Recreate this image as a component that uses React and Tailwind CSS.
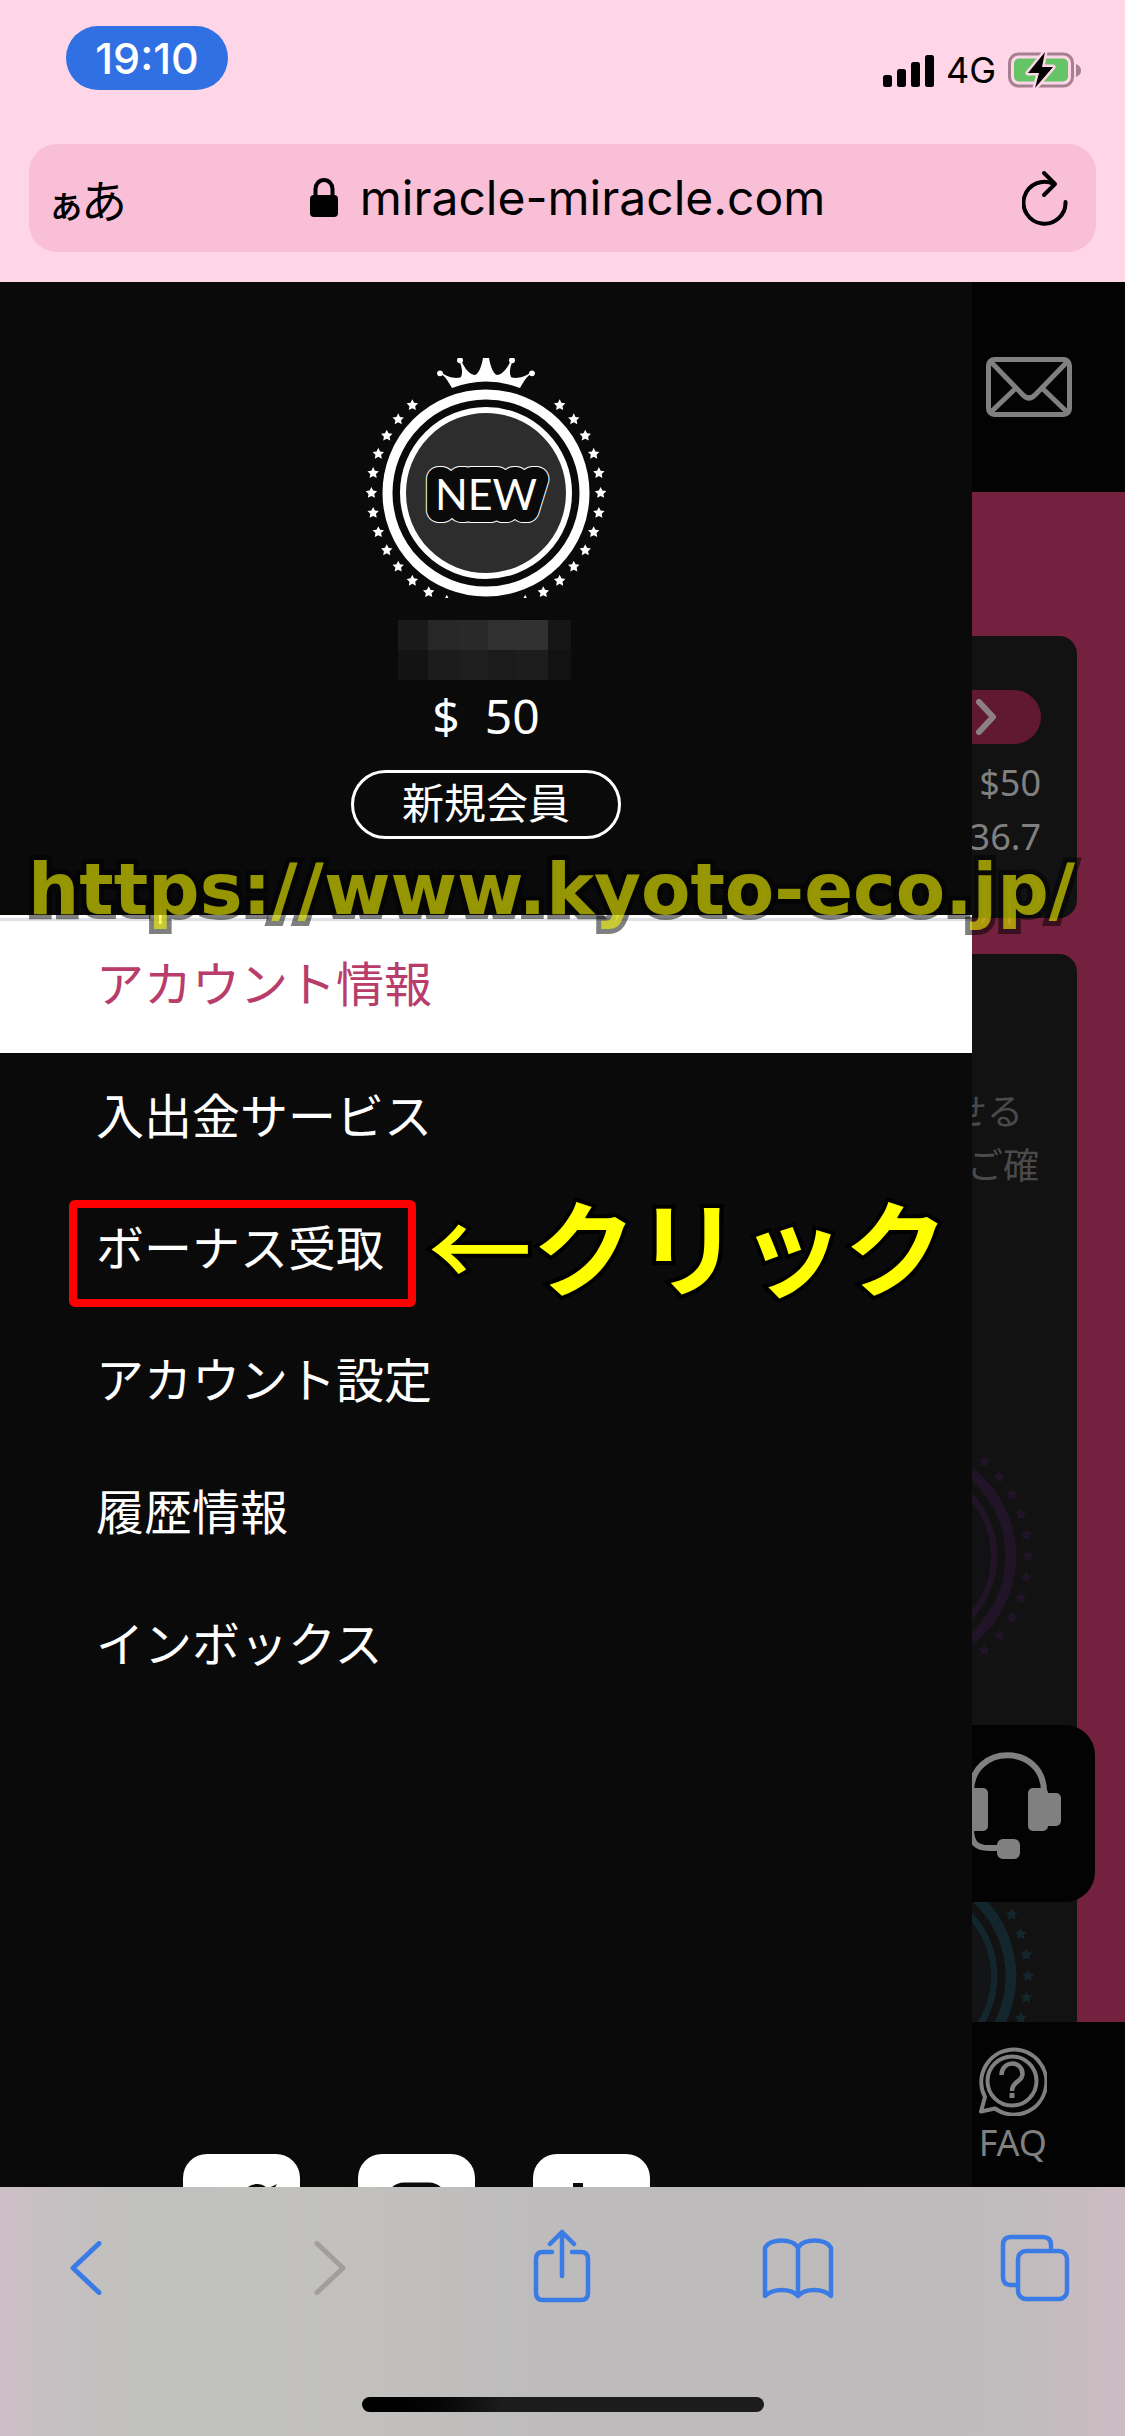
import React from "react";

const JP = "font-['Noto_Sans','Noto_Sans_CJK_JP',sans-serif]";

function starPoints(cx, cy, r) {
  const pts = [];
  for (let i = 0; i < 10; i++) {
    const a = (Math.PI / 5) * i - Math.PI / 2;
    const rad = i % 2 ? r * 0.5 : r;
    pts.push(`${(cx + Math.cos(a) * rad).toFixed(2)},${(cy + Math.sin(a) * rad).toFixed(2)}`);
  }
  return pts.join(" ");
}

const STAR_ANGLES = Array.from({ length: 36 }, (_, i) => i * 10).filter((a) => a < 240 || a > 300);

function Badge({ color, fill, label, className }) {
  return (
    <svg viewBox="0 0 240 240" className={className} role="img" aria-label={label || "rank"}>
      {STAR_ANGLES.map((a) => {
        const t = (a * Math.PI) / 180;
        return <polygon key={a} points={starPoints(120 + Math.cos(t) * 114.6, 135 + Math.sin(t) * 114.6, 6)} fill={color} />;
      })}
      <path
        d="M86 30 C82 23 79 18 74 15 L75 14 C82 20 91 21 95 19 C97 15 96 8 93 2.500 L95 2 C99 12 105 17 109 17 C114 15 117 4 118 -8 H122 C123 4 126 15 131 17 C135 17 141 12 145 2 L147 2.500 C144 8 143 15 145 19 C149 21 158 20 165 14 L166 15 C161 18 158 23 154 30 Q120 17 86 30Z"
        fill={color}
      />
      <g fill={color}>
        <circle cx="74" cy="15.300" r="2.900" />
        <circle cx="94" cy="2.300" r="3" />
        <circle cx="146" cy="2.300" r="3" />
        <circle cx="166" cy="15.300" r="2.900" />
      </g>
      <circle cx="120" cy="135" r="98.500" fill="none" stroke={color} strokeWidth="10" />
      <circle cx="120" cy="135" r="83" fill={fill} stroke={color} strokeWidth="6" />
      {label && (
        <g fontFamily="Lato, sans-serif" fontSize="43" textAnchor="middle" strokeLinejoin="round">
          <text x="120" y="152" fill="#fff" stroke="#fff" strokeWidth="26">{label}</text>
          <text x="120" y="152" fill="#0a0a0a" stroke="#0a0a0a" strokeWidth="24">{label}</text>
          <text x="120" y="152" fill="#fff">{label}</text>
        </g>
      )}
    </svg>
  );
}

function BrowserHeader() {
  return (
    <header className="bg-[#ffd5e8] px-[29px] pb-[30px] text-black font-['Inter',sans-serif]">
      <div className="flex h-36 items-start justify-between pl-[37px] pr-[14px] pt-[26px]">
        <div className="flex h-16 w-[162px] items-center justify-center rounded-full bg-[#3070e3] text-[43px] font-medium leading-none text-white">
          19:10
        </div>
        <div className="flex items-center pt-[26px]">
          <svg width="51" height="33" viewBox="0 0 51 33" aria-label="signal">
            <rect x="0" y="21" width="9" height="12" rx="2.500" />
            <rect x="14" y="15" width="9" height="18" rx="2.500" />
            <rect x="28" y="8" width="9" height="25" rx="2.500" />
            <rect x="42" y="1" width="9" height="32" rx="2.500" />
          </svg>
          <span className="ml-3 text-4xl leading-8">4G</span>
          <svg className="ml-3" width="74" height="36" viewBox="0 0 74 36" aria-label="battery">
            <rect x="1.500" y="2" width="63" height="32" rx="9" fill="none" stroke="#a5808f" strokeWidth="3" />
            <path d="M68 12 Q73 14 73 18.500 Q73 23 68 25Z" fill="#a5808f" />
            <rect x="6" y="6.500" width="54" height="23" rx="5" fill="#64c466" />
            <path d="M37 0 L20 21 H31 L27 36 L45 15 H34 Z" fill="#000" stroke="#ffd5e8" strokeWidth="5" paintOrder="stroke" strokeLinejoin="round" />
          </svg>
        </div>
      </div>
      <div className="flex h-[108px] items-center justify-between rounded-[28px] bg-[#f8bfd7] pl-[18px] pr-7">
        <button className="flex items-baseline font-['Noto_Sans_CJK_JP',sans-serif] leading-none" aria-label="ページ設定">
          <span className="-mr-1 text-[38px] font-medium">ぁ</span>
          <span className="text-[46px]">あ</span>
        </button>
        <div className="mr-[14px] flex items-center gap-[22px]">
          <svg width="28" height="40" viewBox="0 0 28 40" aria-label="secure">
            <rect x="0" y="17" width="28" height="22" rx="4" />
            <path d="M5.500 19 V11 A8.500 9 0 0 1 22.500 11 V19" fill="none" stroke="#000" strokeWidth="4" />
          </svg>
          <span className="text-5xl leading-none">miracle-miracle.com</span>
        </div>
        <button aria-label="再読み込み">
          <svg width="46" height="56" viewBox="0 0 46 56" fill="none" stroke="#000" strokeWidth="4" strokeLinecap="round" strokeLinejoin="round">
            <path d="M32 14 A21 21 0 1 0 43.500 32" />
            <path d="M22 3 L33 14 L22 25" />
          </svg>
        </button>
      </div>
    </header>
  );
}

const MOSAIC = [
  ["bg-[#1a1a1a]", "bg-[#272727]", "bg-[#292929]", "bg-[#303030]", "bg-[#313131]", "bg-[#161616]"],
  ["bg-[#131313]", "bg-[#1c1c1c]", "bg-[#1e1e1e]", "bg-[#1b1b1b]", "bg-[#1d1d1d]", "bg-[#121212]"],
];

const MENU = ["アカウント情報", "入出金サービス", "ボーナス受取", "アカウント設定", "履歴情報", "インボックス"];

function SocialLinks() {
  return (
    <div className="flex h-[33px] gap-[58px] overflow-hidden pl-[183px]">
      <a href="#twitter" aria-label="Twitter" className="h-[117px] w-[117px] shrink-0 rounded-3xl bg-white">
        <svg viewBox="0 0 117 117">
          <path d="M95 35 C92 37 90 38 86 38 C90 36 92 34 94 30 C90 32 88 33 84 34 C76 26 58 30 57 49 C44 48 34 42 27 33 C22 42 25 52 32 58 C28 58 26 57 24 56 C24 65 30 72 38 74 C70 100 98 75 87 44 C91 41 93 38 95 35Z" fill="#0a0a0a" />
        </svg>
      </a>
      <a href="#instagram" aria-label="Instagram" className="h-[117px] w-[117px] shrink-0 rounded-3xl bg-white">
        <svg viewBox="0 0 117 117" fill="none" stroke="#0a0a0a" strokeWidth="7">
          <rect x="32" y="32" width="53" height="53" rx="14" />
          <circle cx="58" cy="58" r="12" />
        </svg>
      </a>
      <a href="#tumblr" aria-label="Tumblr" className="h-[117px] w-[117px] shrink-0 rounded-3xl bg-white">
        <svg viewBox="0 0 117 117" fill="none" stroke="#0a0a0a" strokeWidth="10">
          <path d="M45 29 V75 Q45 90 62 90 H72 M45 48 H70" />
        </svg>
      </a>
    </div>
  );
}

function Drawer() {
  return (
    <aside className="flex min-h-[1905px] w-[86.4%] shrink-0 flex-col overflow-hidden bg-[#0a0a0a] text-white">
      <div className="flex h-[636px] flex-col items-center pt-[76px]">
        <Badge color="#fff" fill="#2d2d2d" label="NEW" className="size-60" />
        <div className="mt-[22px] w-[176px]" aria-hidden="true">
          {MOSAIC.map((row, i) => (
            <div key={i} className="flex h-[30px]">
              {row.map((c, j) => (
                <span key={j} className={`${c} ${j === 5 ? "w-[23px]" : "w-[30px]"}`} />
              ))}
            </div>
          ))}
        </div>
        <p className="mt-1 font-['Noto_Sans',sans-serif] text-5xl leading-[64px]">$&nbsp; 50</p>
        <button className={`mt-[22px] h-[69px] w-[270px] rounded-full border-3 border-white pb-[3px] text-[42px] leading-none ${JP}`}>新規会員</button>
      </div>
      <nav>
        <ul>
          {MENU.map((label, i) => (
            <li key={label} className={i === 0 ? "border-t-3 border-[#dee2e6] bg-white text-[#b83d6b] ring-3 ring-white" : "relative"}>
              <a href="#menu" className={`flex items-center pl-24 text-5xl ${i === 0 ? "h-[129px] pb-1" : "h-[132px]"} ${JP}`}>
                {label}
              </a>
              {i === 2 && (
                <div className="pointer-events-none absolute left-[69px] top-[18px] flex h-[107px] items-center whitespace-nowrap text-[#ff0] [-webkit-text-stroke:8px_#000] [paint-order:stroke_fill]">
                  <span className="h-full w-[347px] rounded-md border-8 border-[#f00]" />
                  <span className="ml-3 pb-5 font-['Noto_Sans_CJK_JP',sans-serif] text-[104px] font-bold leading-none">
                    <span className="font-medium">←</span>クリック
                  </span>
                </div>
              )}
            </li>
          ))}
        </ul>
      </nav>
      <div className="mt-auto">
        <SocialLinks />
      </div>
    </aside>
  );
}

function PageBehind() {
  return (
    <section className="relative flex min-w-0 flex-1 flex-col overflow-hidden bg-[#73213e] font-['Noto_Sans','Noto_Sans_CJK_JP',sans-serif] text-[#808080]">
      <div className="flex h-[210px] shrink-0 items-center justify-end bg-[#030303] pr-[53px]">
        <button aria-label="メール">
          <svg width="86" height="60" viewBox="0 0 86 60" fill="none" stroke="#808080" strokeWidth="5" strokeLinecap="round" strokeLinejoin="round">
            <rect x="2.500" y="2.500" width="81" height="55" rx="6" />
            <path d="M5 5 L37 38 Q43 44 49 38 L81 5 M5 55 L30 31 M81 55 L56 31" />
          </svg>
        </button>
      </div>
      <div className="mr-12 mt-36 flex h-[282px] shrink-0 flex-col items-end rounded-r-[18px] bg-[#121212] pr-9 pt-[54px] text-4xl leading-[54px]">
        <button aria-label="詳細" className="flex h-[54px] w-full items-center justify-start rounded-r-full bg-[#611831] pl-1">
          <svg width="22" height="36" viewBox="0 0 22 36" fill="none" stroke="#8c8086" strokeWidth="6" strokeLinecap="round" strokeLinejoin="round">
            <path d="M3 3 L17 18 L3 33" />
          </svg>
        </button>
        <p className="mt-3">$50</p>
        <p>36.7</p>
      </div>
      <div className="mr-12 mt-9 flex min-h-0 flex-1 flex-col items-end overflow-hidden rounded-tr-[18px] bg-[#121212] contain-size">
        <p className="flex shrink-0 flex-col items-end whitespace-nowrap pr-[38px] pt-[131px] text-4xl leading-[54px] text-[#4a4a4a]">
          <span className="pr-4">せる</span>
          <span>ご確</span>
        </p>
        <Badge color="#211426" fill="#121214" className="mr-[43px] mt-[218px] size-[258px] shrink-0" />
        <Badge color="#13262d" fill="#121416" className="mr-[43px] mt-[162px] size-[258px] shrink-0" />
      </div>
      <div className="flex h-[165px] shrink-0 flex-col items-end bg-[#030303] pr-[78px] pt-6 text-4xl leading-[54px]">
        <svg width="70" height="70" viewBox="0 0 70 70" fill="none" stroke="#808080" strokeWidth="4">
          <path d="M8 51 A32.500 32.500 0 1 1 18 62.500 L4 65.500 Z" strokeLinejoin="round" />
          <circle cx="35" cy="35" r="24.500" />
          <path d="M24.500 29 C24.500 14 45.500 14 45.500 28 C45.500 36 35 35 35 45" strokeWidth="4.500" />
          <path d="M35 47 V52" strokeWidth="5" />
        </svg>
        <a href="#faq">FAQ</a>
      </div>
      <button aria-label="サポート" className="absolute right-[30px] top-[1443px] flex h-[177px] w-44 items-start rounded-[30px] bg-[#030303] pl-[33px] pt-[27px]">
        <svg width="110" height="108" viewBox="0 0 110 108" fill="#808080" className="shrink-0">
          <path d="M19 40 C19 -9 92 -9 92 40 M19 76 C19 92 25 96 37 96 H48" fill="none" stroke="#808080" strokeWidth="6" />
          <rect x="16" y="36" width="20" height="43" rx="5" />
          <rect x="76" y="36" width="20" height="43" rx="5" />
          <rect x="90" y="41" width="19" height="33" rx="5" />
          <rect x="45" y="87" width="23" height="20" rx="6" />
        </svg>
      </button>
    </section>
  );
}

function BrowserToolbar() {
  return (
    <footer className="flex flex-col items-center bg-[linear-gradient(90deg,#cdbfc6_0%,#c6c0c2_5%,#c0c0be_13%,#c2c1be_30%,#bdbbbc_50%,#c0bbbc_90%,#cbbcc3_100%)] pb-6">
      <div className="flex h-[210px] w-full items-start justify-between pl-[49px] pr-[54px] pt-[42px]">
        <button aria-label="戻る" className="flex w-[72px] justify-center pt-3">
          <svg width="36" height="54" viewBox="0 0 36 54" fill="none" stroke="#3b7be6" strokeWidth="5" strokeLinecap="round" strokeLinejoin="round">
            <path d="M32 2.500 L6 27 L32 51.500" />
          </svg>
        </button>
        <button aria-label="進む" className="flex w-[72px] justify-center pl-4 pt-3">
          <svg width="36" height="54" viewBox="0 0 36 54" fill="none" stroke="#a09e9f" strokeWidth="5" strokeLinecap="round" strokeLinejoin="round">
            <path d="M4 2.500 L30 27 L4 51.500" />
          </svg>
        </button>
        <button aria-label="共有" className="flex w-[72px] justify-center pl-1">
          <svg width="58" height="74" viewBox="0 0 58 74" fill="none" stroke="#3b7be6" strokeWidth="4.500" strokeLinecap="round" strokeLinejoin="round">
            <path d="M19 23 H10 Q3 23 3 30 V64 Q3 71 10 71 H48 Q55 71 55 64 V30 Q55 23 48 23 H39" />
            <path d="M29 47 V4 M17 15 L29 3 L41 15" />
          </svg>
        </button>
        <button aria-label="ブックマーク" className="flex w-[72px] justify-center pt-[9px]">
          <svg width="72" height="62" viewBox="0 0 72 62" fill="none" stroke="#3b7be6" strokeWidth="4.500" strokeLinejoin="round">
            <path d="M36 10 C31 0 8 0 3 10 V58 C11 50 29 50 36 58 C43 50 61 50 69 58 V10 C64 0 41 0 36 10 V58" />
          </svg>
        </button>
        <button aria-label="タブ" className="flex w-[72px] justify-center pt-[5px]">
          <svg width="70" height="68" viewBox="0 0 70 68" fill="none" stroke="#3b7be6" strokeWidth="4.500">
            <path d="M17 51 H11 Q3 51 3 43 V11 Q3 3 11 3 H43 Q51 3 51 11 V17" />
            <rect x="18" y="17" width="49" height="48" rx="8" />
          </svg>
        </button>
      </div>
      <div className="h-[15px] w-[402px] rounded-full bg-linear-to-r from-black to-[#1c1c1c] to-35%" />
    </footer>
  );
}

export default function App() {
  return (
    <div className="flex min-h-screen flex-col">
      <BrowserHeader />
      <main className="relative flex flex-1">
        <Drawer />
        <PageBehind />
        <p className="pointer-events-none absolute left-7 top-[565px] whitespace-nowrap font-['DejaVu_Sans',sans-serif] text-[72px] font-bold leading-[84px] text-[rgba(255,255,0,0.58)] [-webkit-text-stroke:10px_rgba(0,0,0,0.5)] [paint-order:stroke_fill]">
          https://www.kyoto-eco.jp/
        </p>
      </main>
      <BrowserToolbar />
    </div>
  );
}
